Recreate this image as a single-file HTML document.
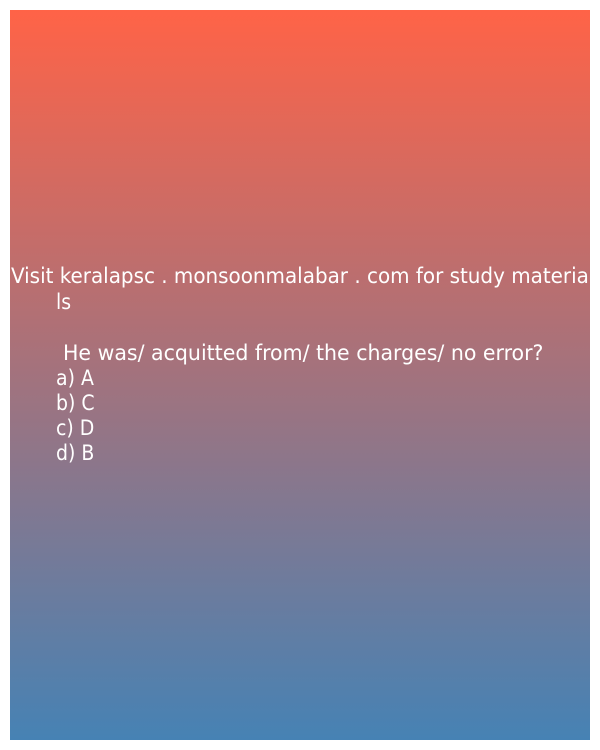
<!DOCTYPE html>
<html><head><meta charset="utf-8"><style>
html,body{margin:0;padding:0;width:600px;height:750px;background:#fff;overflow:hidden}
.box{position:absolute;left:10px;top:10px;width:580px;height:730px;background:linear-gradient(#ff6347,#4682b4)}
.t{position:absolute;color:#fff;font-family:"Liberation Sans Narrow","DejaVu Sans Condensed","Liberation Sans",sans-serif;font-stretch:condensed;font-size:21px;line-height:25px;white-space:pre;transform-origin:0 0}
</style></head><body>
<div class="box"></div>
<div class="t" style="left:11px;top:264px;transform:scaleX(1.055)">Visit keralapsc . monsoonmalabar . com for study materia</div>
<div class="t" style="left:56px;top:290px;">ls</div>
<div class="t" style="left:63px;top:341px;transform:scaleX(1.086)">He was/ acquitted from/ the charges/ no error?</div>
<div class="t" style="left:56px;top:366px;">a) A</div>
<div class="t" style="left:56px;top:391px;">b) C</div>
<div class="t" style="left:56px;top:416px;">c) D</div>
<div class="t" style="left:56px;top:441px;">d) B</div>
</body></html>
